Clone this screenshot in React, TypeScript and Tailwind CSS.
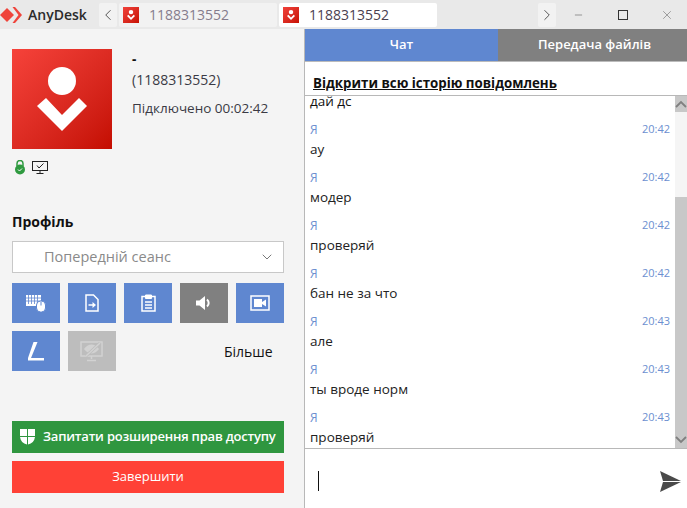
import { ChevronDown, ChevronLeft, ChevronRight, Minus, X } from "lucide-react";

const messages = [
  { time: "20:42", text: "ау" },
  { time: "20:42", text: "модер" },
  { time: "20:42", text: "проверяй" },
  { time: "20:42", text: "бан не за что" },
  { time: "20:43", text: "але" },
  { time: "20:43", text: "ты вроде норм" },
  { time: "20:43", text: "проверяй" },
];

function Logo({ size }: { size: number }) {
  return (
    <svg width={size} height={size} viewBox="0 0 100 100">
      <circle cx="50" cy="32" r="14" fill="#fff" />
      <path d="M25 57 L34 49 L50 66 L67 49 L75 57 L50 82 Z" fill="#fff" />
    </svg>
  );
}

function Tab({ active }: { active?: boolean }) {
  return (
    <div className={`flex h-6 w-[158px] items-center gap-[10px] rounded-[2px] pl-1 ${active ? "bg-white text-[#4a4050]" : "bg-[#f2f2f2] text-[#857c8c]"}`}>
      <div className="flex h-4 w-4 items-center justify-center bg-gradient-to-br from-[#f04038] to-[#c80f00]">
        <Logo size={16} />
      </div>
      <span className="text-[14px]">1188313552</span>
    </div>
  );
}

function ToolButton({ color = "bg-[#5f87d0]", children }: { color?: string; children: React.ReactNode }) {
  return <div className={`flex h-10 w-12 items-center justify-center ${color}`}>{children}</div>;
}

export default function App() {
  return (
    <div className="flex h-[508px] w-[687px] flex-col overflow-hidden bg-white font-['Open_Sans',sans-serif] text-[#111]">
      <div className="flex h-[29px] shrink-0 items-center bg-[#e9e9e9]">
        <svg width="22" height="18" viewBox="0 0 22 18">
          <path d="M0 9 L7 2 L14 9 L7 16 Z" fill="#ef443b" />
          <path d="M12.500 1 L15 1 L22 9 L15 17 L12.500 17 L18.500 9 Z" fill="#ef443b" />
        </svg>
        <span className="ml-[6px] w-[71px] text-[14px] font-semibold text-[#2b2b2b]">AnyDesk</span>
        <div className="flex h-6 w-[18px] items-center justify-center rounded-[2px] bg-[#f2f2f2]">
          <ChevronLeft size={20} strokeWidth={1.2} className="text-[#444]" />
        </div>
        <div className="mx-[2px]">
          <Tab />
        </div>
        <Tab active />
        <div className="ml-[101px] flex h-6 w-[18px] items-center justify-center rounded-[2px] bg-[#f2f2f2]">
          <ChevronRight size={20} strokeWidth={1.2} className="text-[#444]" />
        </div>
        <div className="ml-[17px] flex w-[11px] justify-center">
          <Minus size={14} strokeWidth={1} className="text-[#333]" />
        </div>
        <div className="ml-[33px] flex w-[11px] justify-center">
          <div className="h-[10px] w-[10px] border border-[#333]" />
        </div>
        <div className="ml-[32px]">
          <X size={14} strokeWidth={1} className="text-[#666]" />
        </div>
      </div>

      <div className="flex min-h-0 flex-1">
        <div className="flex w-[304px] shrink-0 flex-col bg-[#f4f4f4] pr-5 pl-3">
          <div className="mt-5 flex">
            <div className="flex h-[100px] w-[100px] shrink-0 items-center justify-center bg-gradient-to-br from-[#f6423a] to-[#c40c00]">
              <Logo size={100} />
            </div>
            <div className="ml-5 text-[13.5px] text-[#3a3a44]">
              <div className="mt-[1px] h-[19px] leading-[19px] font-bold text-[#111]">-</div>
              <div className="mt-[1px] text-[14px] leading-[19px]">(1188313552)</div>
              <div className="mt-[10px] leading-[19px]">Підключено 00:02:42</div>
            </div>
          </div>
          <div className="mt-[10px] flex h-4 items-center gap-[7px] pl-[3px]">
            <svg width="10" height="15" viewBox="0 0 10 15">
              <path d="M2 6 V3.500 A3 3 0 0 1 8 3.500 V6" fill="none" stroke="#2f9a40" strokeWidth="1.500" />
              <circle cx="5" cy="9.500" r="5" fill="#2f9a40" />
              <path d="M3 9.500 L4.500 11 L7 8.500" fill="none" stroke="#fff" strokeWidth="1" />
            </svg>
            <svg width="16" height="13" viewBox="0 0 16 13">
              <rect x="0.500" y="0.500" width="15" height="9" fill="none" stroke="#222" />
              <path d="M5 4.500 L7 7 L11.500 2.500" fill="none" stroke="#222" />
              <path d="M8 10 V12 M4.500 12.500 H11.500" stroke="#222" />
            </svg>
          </div>
          <div className="mt-[37px] text-[14px] leading-[20px] font-bold text-[#111]">Профіль</div>
          <div className="mt-[9px] flex h-8 w-[272px] items-center justify-between border border-[#c8c8c8] bg-white pr-[8px] pl-[31px] text-[14.5px] text-[#8a8a8a]">
            <span>Попередній сеанс</span>
            <ChevronDown size={16} strokeWidth={1.2} className="text-[#555]" />
          </div>
          <div className="mt-[10px] flex gap-2">
            <ToolButton>
              <svg width="20" height="17" viewBox="0 0 20 17" fill="none">
                <rect x="0" y="0" width="15" height="11" fill="#fff" />
                <path d="M2.500 0V9M5.500 0V9M8.500 0V9M11.500 0V9M0 3H15M0 6H15" stroke="#5f87d0" strokeWidth="0.800" />
                <rect x="10.500" y="6" width="9" height="11" rx="4" fill="#fff" stroke="#5f87d0" />
                <path d="M15 6.500V10.500" stroke="#5f87d0" />
              </svg>
            </ToolButton>
            <ToolButton>
              <svg width="14" height="18" viewBox="0 0 14 18" fill="none" stroke="#fff" strokeWidth="1.500">
                <path d="M1 1h7.500L13 5.500V17H1z" />
                <path d="M3.500 11H8" />
                <path d="M7.500 8l3.500 3-3.500 3z" fill="#fff" stroke="none" />
              </svg>
            </ToolButton>
            <ToolButton>
              <svg width="15" height="18" viewBox="0 0 15 18" fill="none" stroke="#fff" strokeWidth="1.500">
                <path d="M4 2.500H1V17h13V2.500h-3" />
                <path d="M4.500 1h6v3.500h-6z" fill="#fff" strokeWidth="1" />
                <path d="M4 8h7M4 11h7M4 14h7" />
              </svg>
            </ToolButton>
            <ToolButton color="bg-[#808080]">
              <svg width="16" height="14" viewBox="0 0 16 14" fill="#fff">
                <path d="M0 4.500h3.500L9 0v14L3.500 9.500H0z" />
                <path d="M11 3.500a4.500 4.500 0 0 1 0 7" fill="none" stroke="#fff" strokeWidth="2" />
              </svg>
            </ToolButton>
            <ToolButton>
              <svg width="20" height="16" viewBox="0 0 20 16" fill="none">
                <rect x="1" y="1" width="18" height="14" stroke="#fff" strokeWidth="1.500" />
                <path d="M4 4h8v3l4-2.500v7L12 9v3H4z" fill="#fff" />
              </svg>
            </ToolButton>
          </div>
          <div className="mt-2 flex items-center gap-2">
            <ToolButton>
              <svg width="16" height="19" viewBox="0 0 16 19" fill="#fff">
                <path d="M5.500 0h4L3 16H0z" />
                <path d="M0 16h16v2.500H0z" />
              </svg>
            </ToolButton>
            <ToolButton color="bg-[#bdbdbd]">
              <svg width="24" height="21" viewBox="0 0 24 21" fill="none" stroke="#d2d2d2" strokeWidth="1.500">
                <rect x="1" y="1" width="21" height="14" />
                <path d="M5 8c4-5 9-5 13 0-4 5-9 5-13 0z" fill="#d2d2d2" />
                <path d="M6 15L20 2" stroke="#bdbdbd" strokeWidth="3" />
                <path d="M6 15L20 2M11.500 15v3M7 19.500h9" />
              </svg>
            </ToolButton>
            <span className="ml-[100px] text-[14px] text-[#111]">Більше</span>
          </div>
          <div className="mt-[50px] flex h-8 w-[272px] items-center gap-2 bg-[#2f963f] pl-2 text-[13px] font-semibold tracking-[-0.2px] whitespace-nowrap text-white">
            <svg width="15" height="16" viewBox="0 0 15 16" fill="#fff">
              <path d="M0 0h7v7H0zM8 0h7v7H8zM0 8h7v7.500C3 14.500 0.500 12 0 8zM8 8h7c-0.500 4-3 6.500-7 7.500z" />
            </svg>
            <span>Запитати розширення прав доступу</span>
          </div>
          <div className="mt-2 flex h-8 w-[272px] items-center justify-center bg-[#ff4136] text-[13px] font-medium text-white">
            Завершити
          </div>
        </div>

        <div className="flex min-w-0 flex-1 flex-col border-l border-[#b8b8b8]">
          <div className="flex h-[33px] shrink-0 border-b border-[#bbb] text-[13px] font-semibold text-white">
            <div className="flex w-[193px] items-center justify-center bg-[#5f87d0]">Чат</div>
            <div className="flex flex-1 items-center justify-center bg-[#808080] pl-1">Передача файлів</div>
          </div>
          <div className="flex h-[34px] shrink-0 items-end border-b border-[#b8b8b8] pb-[3px] pl-2">
            <span className="text-[13.3px] leading-[18px] font-bold text-[#111] underline">Відкрити всю історію повідомлень</span>
          </div>
          <div className="flex h-[353px] shrink-0 overflow-hidden border-b border-[#b8b8b8]">
            <div className="min-w-0 flex-1 overflow-hidden px-[5px]">
              <div className="-mt-1 h-[21px] text-[13.5px] leading-[18px] text-[#111]">дай дс</div>
              {messages.map((m, i) => (
                <div key={i} className="h-12 pt-[3px]">
                  <div className="flex h-6 items-center justify-between pt-[3px] text-[11px] text-[#6c8fd0]">
                    <span className="text-[12px]">Я</span>
                    <span>{m.time}</span>
                  </div>
                  <div className="text-[13.5px] leading-[18px] text-[#222]">{m.text}</div>
                </div>
              ))}
            </div>
            <div className="flex w-3 shrink-0 flex-col bg-[#f5f5f5]">
              <div className="flex h-4 items-center justify-center bg-[#c8c8c8]">
                <svg width="12" height="8" viewBox="0 0 12 8" fill="none" stroke="#808080" strokeWidth="1.800">
                  <path d="M1 7l5-5 5 5" />
                </svg>
              </div>
              <div className="mt-[85px] flex-1 bg-[#c8c8c8]" />
              <div className="flex h-4 items-center justify-center bg-[#c8c8c8]">
                <svg width="12" height="8" viewBox="0 0 12 8" fill="none" stroke="#808080" strokeWidth="1.800">
                  <path d="M1 1l5 5 5-5" />
                </svg>
              </div>
            </div>
          </div>
          <div className="flex flex-1 items-center justify-between pt-[5px] pr-[6px] pl-[13px]">
            <div className="h-5 w-px bg-[#111]" />
            <svg width="21" height="21" viewBox="0 0 21 21" fill="#4a4a4a">
              <path d="M0 0 L21 10 L3 10 Z" />
              <path d="M3 11 L21 11 L0 21 Z" />
            </svg>
          </div>
        </div>
      </div>
    </div>
  );
}
